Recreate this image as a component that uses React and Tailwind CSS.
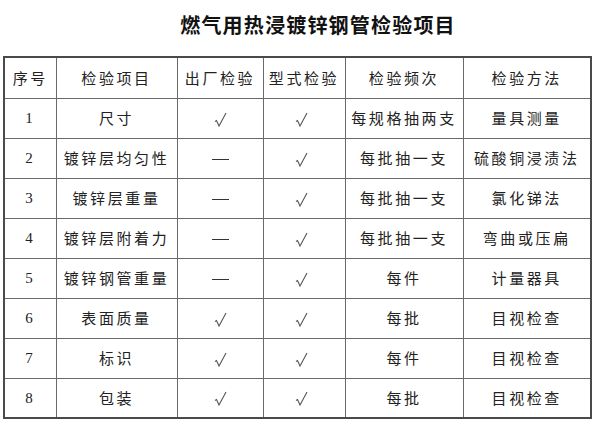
import React from 'react';

const rows = [
  ['1', '尺寸', '√', '√', '每规格抽两支', '量具测量'],
  ['2', '镀锌层均匀性', '—', '√', '每批抽一支', '硫酸铜浸渍法'],
  ['3', '镀锌层重量', '—', '√', '每批抽一支', '氯化锑法'],
  ['4', '镀锌层附着力', '—', '√', '每批抽一支', '弯曲或压扁'],
  ['5', '镀锌钢管重量', '—', '√', '每件', '计量器具'],
  ['6', '表面质量', '√', '√', '每批', '目视检查'],
  ['7', '标识', '√', '√', '每件', '目视检查'],
  ['8', '包装', '√', '√', '每批', '目视检查'],
];

const headers = ['序号', '检验项目', '出厂检验', '型式检验', '检验频次', '检验方法'];
const widths = ['w-[52px]', 'w-[121px]', 'w-[86px]', 'w-[82px]', 'w-[118px]', 'w-[128px]'];

const Mark = ({ v }) => {
  if (v === '√') {
    return (
      <svg width="13" height="16" viewBox="0 0 13 16" className="inline-block">
        <path d="M1 9.5 L2.5 8.5 L5 14 L12 1" fill="none" stroke="#555" strokeWidth="1.1" />
      </svg>
    );
  }
  return <span className="inline-block w-[17px] h-[1.5px] bg-[#333] align-middle" />;
};

const App = () => {
  return (
    <div className="w-[600px] h-[428px] bg-white font-['Noto_Sans_CJK_SC',sans-serif] text-[#222]">
      <div className="h-[56px] flex items-start justify-center pl-[36px] pt-[11px]">
        <h1 className="text-[20px] leading-[28px] font-bold tracking-[1.2px] text-[#111]">
          燃气用热浸镀锌钢管检验项目
        </h1>
      </div>
      <div className="pl-[3px]">
        <table className="border-collapse border-2 border-[#4a4a4a] table-fixed text-[15px] tracking-[2.6px]">
          <thead>
            <tr className="h-[41px]">
              {headers.map((h, i) => (
                <th key={h} className={`${widths[i]} border border-[#6a6a6a] font-normal text-center p-0`}>
                  {h}
                </th>
              ))}
            </tr>
          </thead>
          <tbody>
            {rows.map((r) => (
              <tr key={r[0]} className="h-[40px]">
                <td className="border border-[#6a6a6a] text-center p-0 font-['Liberation_Serif',serif] text-[15px]">{r[0]}</td>
                <td className="border border-[#6a6a6a] text-center p-0">{r[1]}</td>
                <td className="border border-[#6a6a6a] text-center p-0"><Mark v={r[2]} /></td>
                <td className="border border-[#6a6a6a] text-center p-0 pr-[6px]"><Mark v={r[3]} /></td>
                <td className="border border-[#6a6a6a] text-center p-0">{r[4]}</td>
                <td className="border border-[#6a6a6a] text-center p-0">{r[5]}</td>
              </tr>
            ))}
          </tbody>
        </table>
      </div>
    </div>
  );
};

export default App;
